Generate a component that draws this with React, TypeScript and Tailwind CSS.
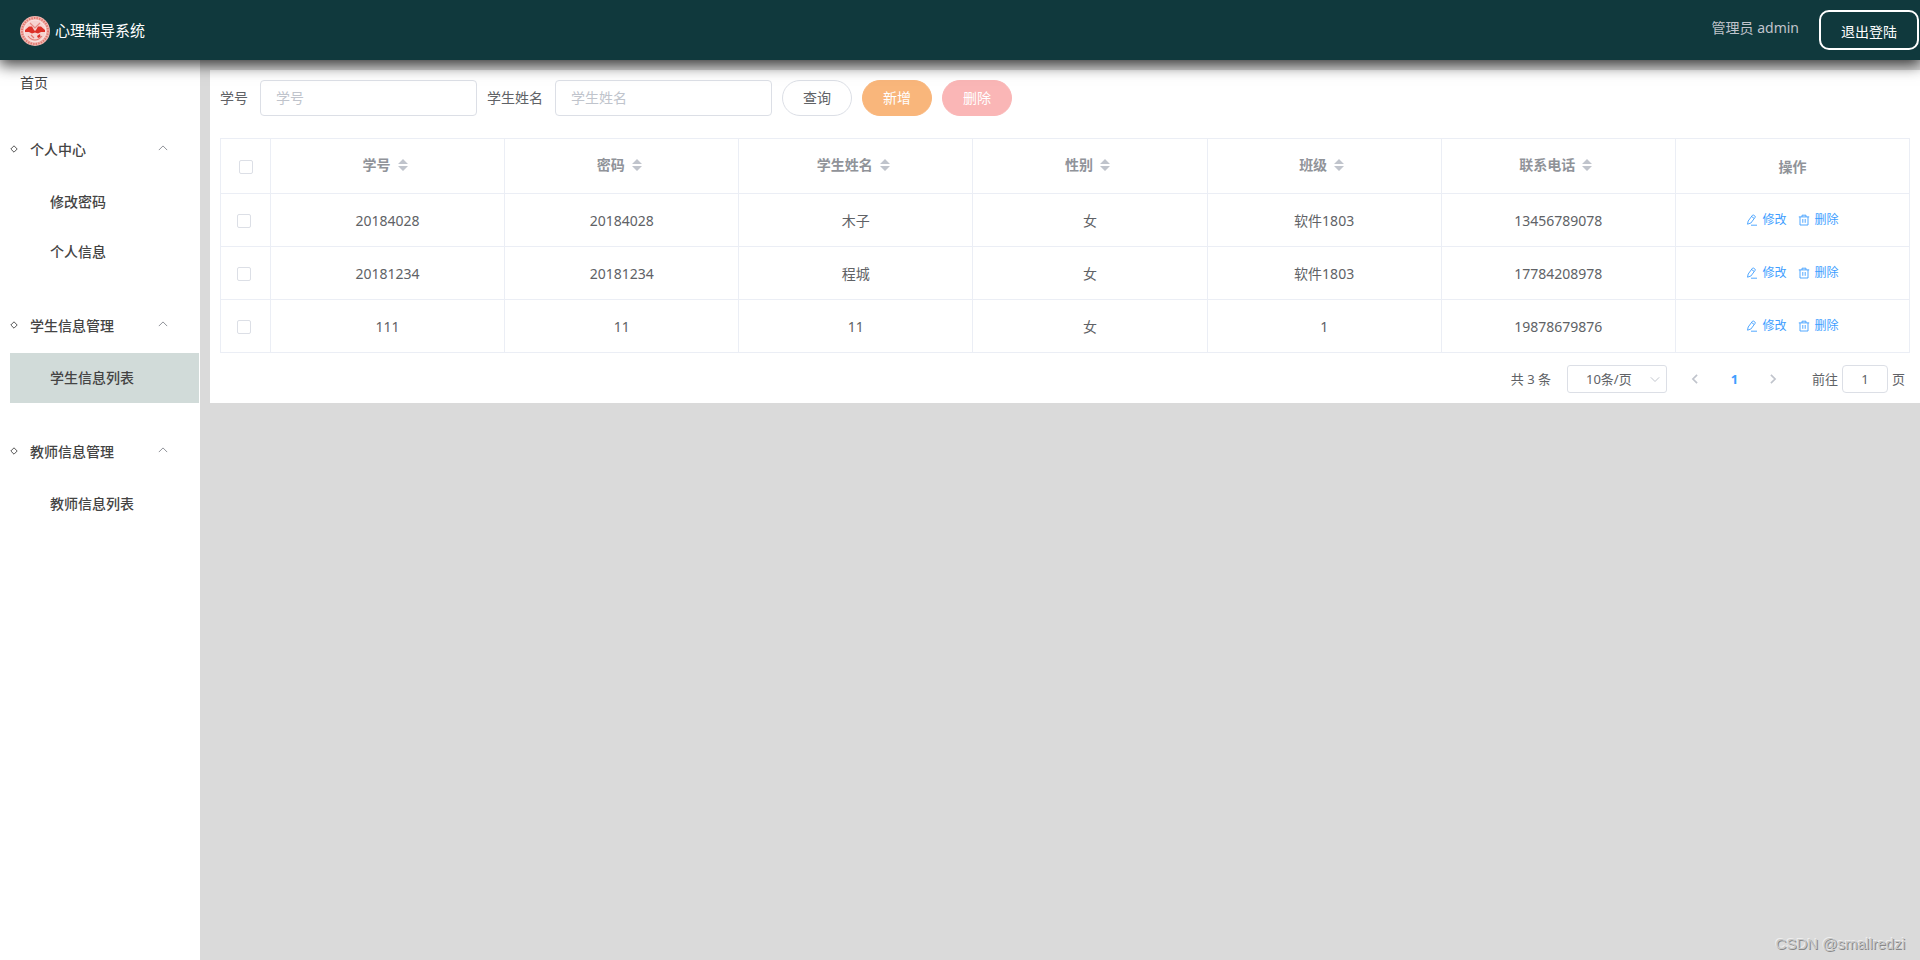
import { useState } from 'react';
import type { FC, ReactNode } from 'react';
import clsx from 'clsx';

interface Student {
  id: string;
  password: string;
  name: string;
  gender: string;
  className: string;
  phone: string;
}

interface MenuGroup {
  title: string;
  items: string[];
}

const menuGroups: MenuGroup[] = [
  { title: '个人中心', items: ['修改密码', '个人信息'] },
  { title: '学生信息管理', items: ['学生信息列表'] },
  { title: '教师信息管理', items: ['教师信息列表'] },
];

const columns: { key: keyof Student; label: string }[] = [
  { key: 'id', label: '学号' },
  { key: 'password', label: '密码' },
  { key: 'name', label: '学生姓名' },
  { key: 'gender', label: '性别' },
  { key: 'className', label: '班级' },
  { key: 'phone', label: '联系电话' },
];

const students: Student[] = [
  { id: '20184028', password: '20184028', name: '木子', gender: '女', className: '软件1803', phone: '13456789078' },
  { id: '20181234', password: '20181234', name: '程城', gender: '女', className: '软件1803', phone: '17784208978' },
  { id: '111', password: '11', name: '11', gender: '女', className: '1', phone: '19878679876' },
];

const Chevron: FC<{ d: string; className?: string; width?: number }> = ({ d, className, width = 1.2 }) => (
  <svg className={className} viewBox="0 0 12 12" fill="none" stroke="currentColor" strokeWidth={width}>
    <path d={d} />
  </svg>
);

const EditIcon = () => (
  <svg className="size-3" viewBox="0 0 12 12" fill="none" stroke="currentColor" strokeWidth={0.9}>
    <path d="M1.5 10.2 2.2 7 6.4 1.3Q7 .7 7.8 1.2L8.9 2Q9.6 2.7 9.1 3.4L4.9 9 1.5 10.2ZM5.6 2.5 8 4.3M5 11.2H11" />
  </svg>
);

const DeleteIcon = () => (
  <svg className="size-3" viewBox="0 0 12 12" fill="none" stroke="currentColor" strokeWidth={0.9}>
    <path d="M.8 2.9H11.2M4 2.9V1.2H8V2.9M2 2.9V11H10V2.9M4.8 5V8.8M7.2 5V8.8" />
  </svg>
);

const SortCarets = () => (
  <svg className="size-3" viewBox="0 0 12 12" fill="#c0c4cc">
    <path d="M1 5 6 0 11 5ZM1 7H11L6 12Z" />
  </svg>
);

const Logo = () => (
  <svg className="size-[30px]" viewBox="0 0 30 30">
    <circle cx="15" cy="15" r="15" fill="#f0b5af" />
    <circle cx="15" cy="15" r="13" fill="none" stroke="#e2786f" strokeWidth="2" strokeDasharray="1.4 1.2" />
    <circle cx="15" cy="15" r="11" fill="#f6d3cf" stroke="#fbeae8" strokeWidth=".8" />
    {/* Bird wings and tail */}
    <path d="M5 14 9 10.5 12 10.5 14 14 15 15 16 14 18 10.5 21 10.5 25 14 25 16 21 16 18 17.5 15 16.5 12 17.5 9 16 5 16Z" fill="#dc2f26" />
    <path d="M10 7 15 12 20 7" fill="none" stroke="#e68a82" strokeWidth="1.2" />
    <path d="M8 20Q11 24 15 24 19 24 22 20M11 19 14 22" fill="none" stroke="#e27b73" strokeWidth="1.2" />
    <path d="M17 20 20 18 20.5 21 18 22Z" fill="#dc2f26" />
  </svg>
);

const Header = () => (
  <header className="relative z-10 flex h-[60px] items-center justify-between bg-[#10393d] pr-px pl-5 shadow-[0_4px_14px_1px_rgba(0,0,0,0.75)]">
    <div className="flex items-center gap-[5px] pt-[2px]">
      <Logo />
      <h1 className="text-[15px] text-white">心理辅导系统</h1>
    </div>
    <div className="flex items-center gap-5">
      <span className="pb-1 text-[#c0c4cc]">管理员 admin</span>
      <button type="button" className="h-10 w-[100px] rounded-[10px] border-2 border-white pt-1 text-white">
        退出登陆
      </button>
    </div>
  </header>
);

const Sidebar: FC<{ active: string; onSelect: (item: string) => void }> = ({ active, onSelect }) => (
  <nav className="w-[200px] shrink-0 bg-white text-[#444]">
    <a href="#" className="mb-[17px] flex h-[46px] items-center pl-5">
      首页
    </a>
    {menuGroups.map((group) => (
      <section key={group.title} className="mb-[22px]">
        <h2 className="flex h-[54px] items-center pr-8 pl-[10px] font-medium">
          <svg className="mr-3 mb-[2px] size-2" viewBox="0 0 8 8" fill="none" stroke="currentColor" strokeWidth=".9">
            <path d="M4 .8 7.2 4 4 7.2.8 4Z" />
          </svg>
          {group.title}
          <Chevron d="M1 8.5 6 3.5 11 8.5" className="mb-1 ml-auto size-[10px] text-[#909399]" />
        </h2>
        <ul>
          {group.items.map((item) => (
            <li key={item}>
              <a
                href="#"
                onClick={() => onSelect(item)}
                className={clsx('mr-px ml-[10px] flex h-[50px] items-center pl-10 font-medium', active === item && 'bg-[#d1dbd9]')}
              >
                {item}
              </a>
            </li>
          ))}
        </ul>
      </section>
    ))}
  </nav>
);

const SearchField: FC<{ id: string; label: string }> = ({ id, label }) => (
  <div className="flex items-center gap-3">
    <label htmlFor={id}>{label}</label>
    <input
      id={id}
      type="text"
      placeholder={label}
      className="h-9 w-[217px] rounded border border-[#dcdfe6] px-[15px] pb-[2px] outline-none placeholder:text-[#c0c4cc]"
    />
  </div>
);

const RoundButton: FC<{ className: string; children: ReactNode }> = ({ className, children }) => (
  <button type="button" className={clsx('h-9 w-[70px] rounded-full border', className)}>
    {children}
  </button>
);

const Checkbox: FC<{ label: string }> = ({ label }) => (
  <input
    type="checkbox"
    aria-label={label}
    className="block size-[14px] appearance-none rounded-[2px] border border-[#dcdfe6] bg-white checked:bg-[#409eff]"
  />
);

const StudentTable = () => (
  <table className="w-full table-fixed border-collapse text-center">
    <thead className="text-[#909399]">
      <tr className="h-[55px]">
        <th className="w-[50px] border border-[#ebeef5] pt-[2px] pl-[18px]">
          <Checkbox label="全选" />
        </th>
        {columns.map((col) => (
          <th key={col.key} className="border border-[#ebeef5] pr-1 pb-[2px] font-bold">
            <div className="flex items-center justify-center gap-[6px]">
              {col.label}
              <SortCarets />
            </div>
          </th>
        ))}
        <th className="border border-[#ebeef5] pt-[2px] font-bold">操作</th>
      </tr>
    </thead>
    <tbody>
      {students.map((student) => (
        <tr key={student.id} className="h-[53px]">
          <td className="border border-[#ebeef5] pt-[2px] pl-4">
            <Checkbox label={student.id} />
          </td>
          {columns.map((col) => (
            <td key={col.key} className="border border-[#ebeef5] pt-[2px]">
              {student[col.key]}
            </td>
          ))}
          <td className="border border-[#ebeef5] text-xs text-[#409eff]">
            <div className="flex items-center justify-center gap-3">
              <button type="button" className="flex items-center gap-1">
                <EditIcon />
                修改
              </button>
              <button type="button" className="flex items-center gap-1">
                <DeleteIcon />
                删除
              </button>
            </div>
          </td>
        </tr>
      ))}
    </tbody>
  </table>
);

const Pagination = () => (
  <div className="flex items-center justify-end pt-3 pr-[5px] text-[13px]">
    <span className="mr-4">共 3 条</span>
    <div className="relative">
      <select aria-label="每页条数" className="h-7 w-[100px] appearance-none rounded-[3px] border border-[#dcdfe6] pl-[18px] outline-none">
        <option>10条/页</option>
        <option>20条/页</option>
      </select>
      <Chevron d="M1 4 6 9 11 4" className="pointer-events-none absolute top-[9px] right-[7px] size-[10px] text-[#c0c4cc]" />
    </div>
    <div className="ml-[9px] flex">
      <button type="button" aria-label="上一页" className="flex h-7 w-[39px] items-center justify-center text-[#c0c4cc]">
        <Chevron d="M8.5 1 3.5 6 8.5 11" width={2} className="size-[10px]" />
      </button>
      <button type="button" className="h-7 w-[39px] font-bold text-[#409eff]">1</button>
      <button type="button" aria-label="下一页" className="flex h-7 w-[39px] items-center justify-center text-[#c0c4cc]">
        <Chevron d="M3.5 1 8.5 6 3.5 11" width={2} className="size-[10px]" />
      </button>
    </div>
    <label className="ml-[19px] flex items-center gap-1">
      前往
      <input type="text" defaultValue="1" className="h-7 w-[46px] rounded border border-[#dcdfe6] text-center outline-none" />
      页
    </label>
  </div>
);

export default function App() {
  const [active, setActive] = useState('学生信息列表');

  return (
    <div className="flex min-h-screen flex-col overflow-x-hidden bg-[#dadada] font-['Noto_Sans','Noto_Sans_CJK_SC',sans-serif] text-sm text-[#606266]">
      <Header />
      <div className="flex grow items-stretch">
        <Sidebar active={active} onSelect={setActive} />
        <div className="flex grow flex-col justify-between pt-[10px] pl-[10px]">
          <main className="bg-white p-[10px]">
            <form className="mb-[22px] flex gap-[10px]">
              <SearchField id="student-id" label="学号" />
              <SearchField id="student-name" label="学生姓名" />
              <RoundButton className="border-[#dcdfe6]">查询</RoundButton>
              <RoundButton className="border-[#f9b67b] bg-[#f9b67b] text-white">新增</RoundButton>
              <RoundButton className="border-[#fab6b6] bg-[#fab6b6] text-white">删除</RoundButton>
            </form>
            <StudentTable />
            <Pagination />
          </main>
          <footer className="pr-[15px] pb-[6px] text-right font-['Liberation_Sans',sans-serif] text-[15px] text-[#c8c8c8] [text-shadow:1px_1px_0_#888,-1px_-1px_0_#eee]">
            CSDN @smallredzi
          </footer>
        </div>
      </div>
    </div>
  );
}
